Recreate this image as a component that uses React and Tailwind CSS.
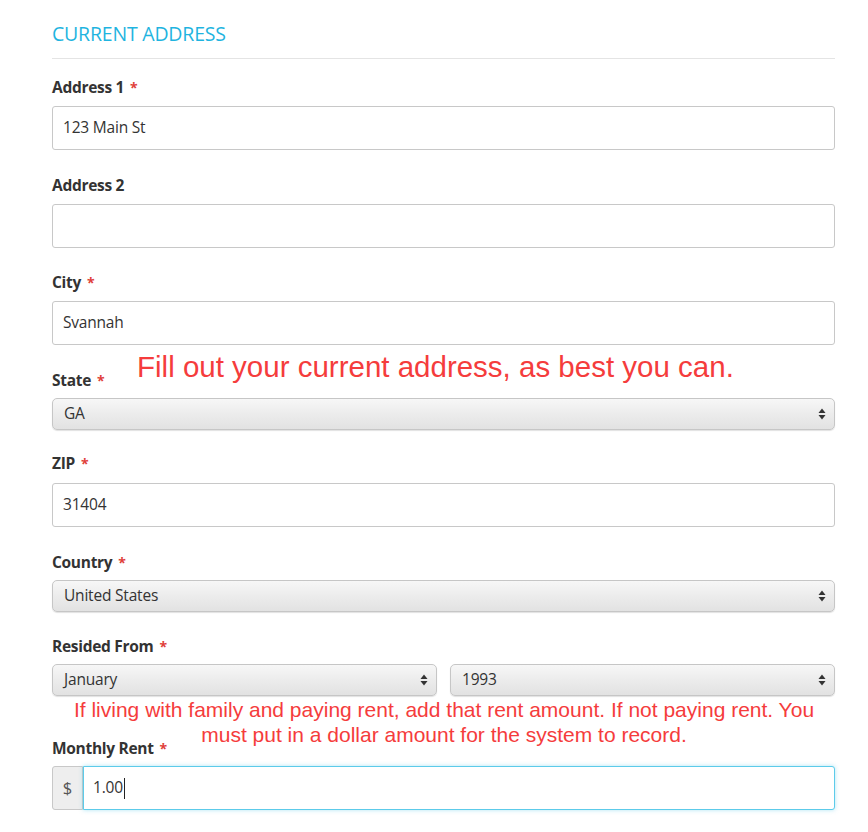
import React from "react";

const baseFont = { fontFamily: "'Open Sans', Lato, sans-serif" };
const noteFont = { fontFamily: "'Liberation Sans', Arial, sans-serif" };

function Label({ children, required = true }) {
  return (
    <div className="h-5 text-[15.5px] leading-5 font-bold tracking-[-0.3px] text-[#333]">
      {children}
      {required && <span className="ml-[6px] text-[14px] text-[#e0403a]">*</span>}
    </div>
  );
}

function TextBox({ value }) {
  return (
    <div className="h-[44px] w-full rounded-[3px] border border-[#c8c8c8] bg-white px-[10px] flex items-center text-[15.5px] tracking-[-0.2px] text-[#333]">
      {value}
    </div>
  );
}

function Arrows() {
  return (
    <svg width="8" height="12" viewBox="0 0 8 12" className="shrink-0">
      <path d="M4 0.5 L7.5 5 H0.5 Z" fill="#333" />
      <path d="M4 11.5 L7.5 7 H0.5 Z" fill="#333" />
    </svg>
  );
}

function SelectBox({ value, className = "" }) {
  return (
    <div
      className={`h-[32px] rounded-[5px] border border-[#c6c6c6] bg-gradient-to-b from-[#f7f7f7] via-[#ececec] to-[#e2e2e2] shadow-[0_1px_1px_rgba(0,0,0,0.12)] pl-[11px] pr-[8px] flex items-center justify-between text-[15.5px] tracking-[-0.2px] text-[#333] ${className}`}
    >
      <span>{value}</span>
      <Arrows />
    </div>
  );
}

export default function App() {
  return (
    <div className="relative min-h-[832px] w-[868px] bg-white" style={baseFont}>
      <div className="ml-[52px] w-[783px] pt-[23px]">
        {/* Section header */}
        <div className="border-b border-[#e4e4e4] pb-[13px]">
          <h2 className="text-[19.5px] leading-[22px] tracking-[-0.2px] text-[#1fb4e0]">CURRENT ADDRESS</h2>
        </div>

        <div className="mt-[18px]">
          <Label>Address 1</Label>
          <div className="mt-[9px]">
            <TextBox value="123 Main St" />
          </div>
        </div>

        <div className="mt-[25px]">
          <Label required={false}>Address 2</Label>
          <div className="mt-[9px]">
            <TextBox value="" />
          </div>
        </div>

        <div className="mt-[24px]">
          <Label>City</Label>
          <div className="mt-[9px]">
            <TextBox value="Svannah" />
          </div>
        </div>

        <div className="mt-[25px]">
          <Label>State</Label>
          <div className="mt-[8px]">
            <SelectBox value="GA" />
          </div>
        </div>

        <div className="mt-[23px]">
          <Label>ZIP</Label>
          <div className="mt-[10px]">
            <TextBox value="31404" />
          </div>
        </div>

        <div className="mt-[25px]">
          <Label>Country</Label>
          <div className="mt-[8px]">
            <SelectBox value="United States" />
          </div>
        </div>

        <div className="mt-[24px]">
          <Label>Resided From</Label>
          <div className="mt-[8px] flex gap-[13px]">
            <SelectBox value="January" className="flex-1" />
            <SelectBox value="1993" className="flex-1" />
          </div>
        </div>

        <div className="mt-[42px]">
          <Label>Monthly Rent</Label>
          <div className="mt-[8px] flex h-[44px]">
            <div className="w-[31px] flex items-center justify-center rounded-l-[3px] border border-[#c8c8c8] bg-[#eeeeee] text-[16.5px] text-[#555]">
              $
            </div>
            <div className="flex-1 flex items-center rounded-r-[3px] border border-[#5ccbea] bg-white pl-[9px] text-[15.5px] tracking-[-0.2px] text-[#333] shadow-[0_0_4px_rgba(92,203,234,0.5)]">
              1.00
              <span className="ml-[1px] h-[21px] w-px bg-[#222]" />
            </div>
          </div>
        </div>
      </div>

      {/* Annotations */}
      <div className="absolute left-[137px] top-[348px] text-[29.5px] leading-[38px] text-[#f53c3c]" style={noteFont}>
        Fill out your current address, as best you can.
      </div>
      <div
        className="absolute left-[40px] top-[697px] w-[808px] text-center text-[21px] leading-[25px] text-[#f53c3c]"
        style={noteFont}
      >
        If living with family and paying rent, add that rent amount. If not paying rent. You
        <br />
        must put in a dollar amount for the system to record.
      </div>
    </div>
  );
}
